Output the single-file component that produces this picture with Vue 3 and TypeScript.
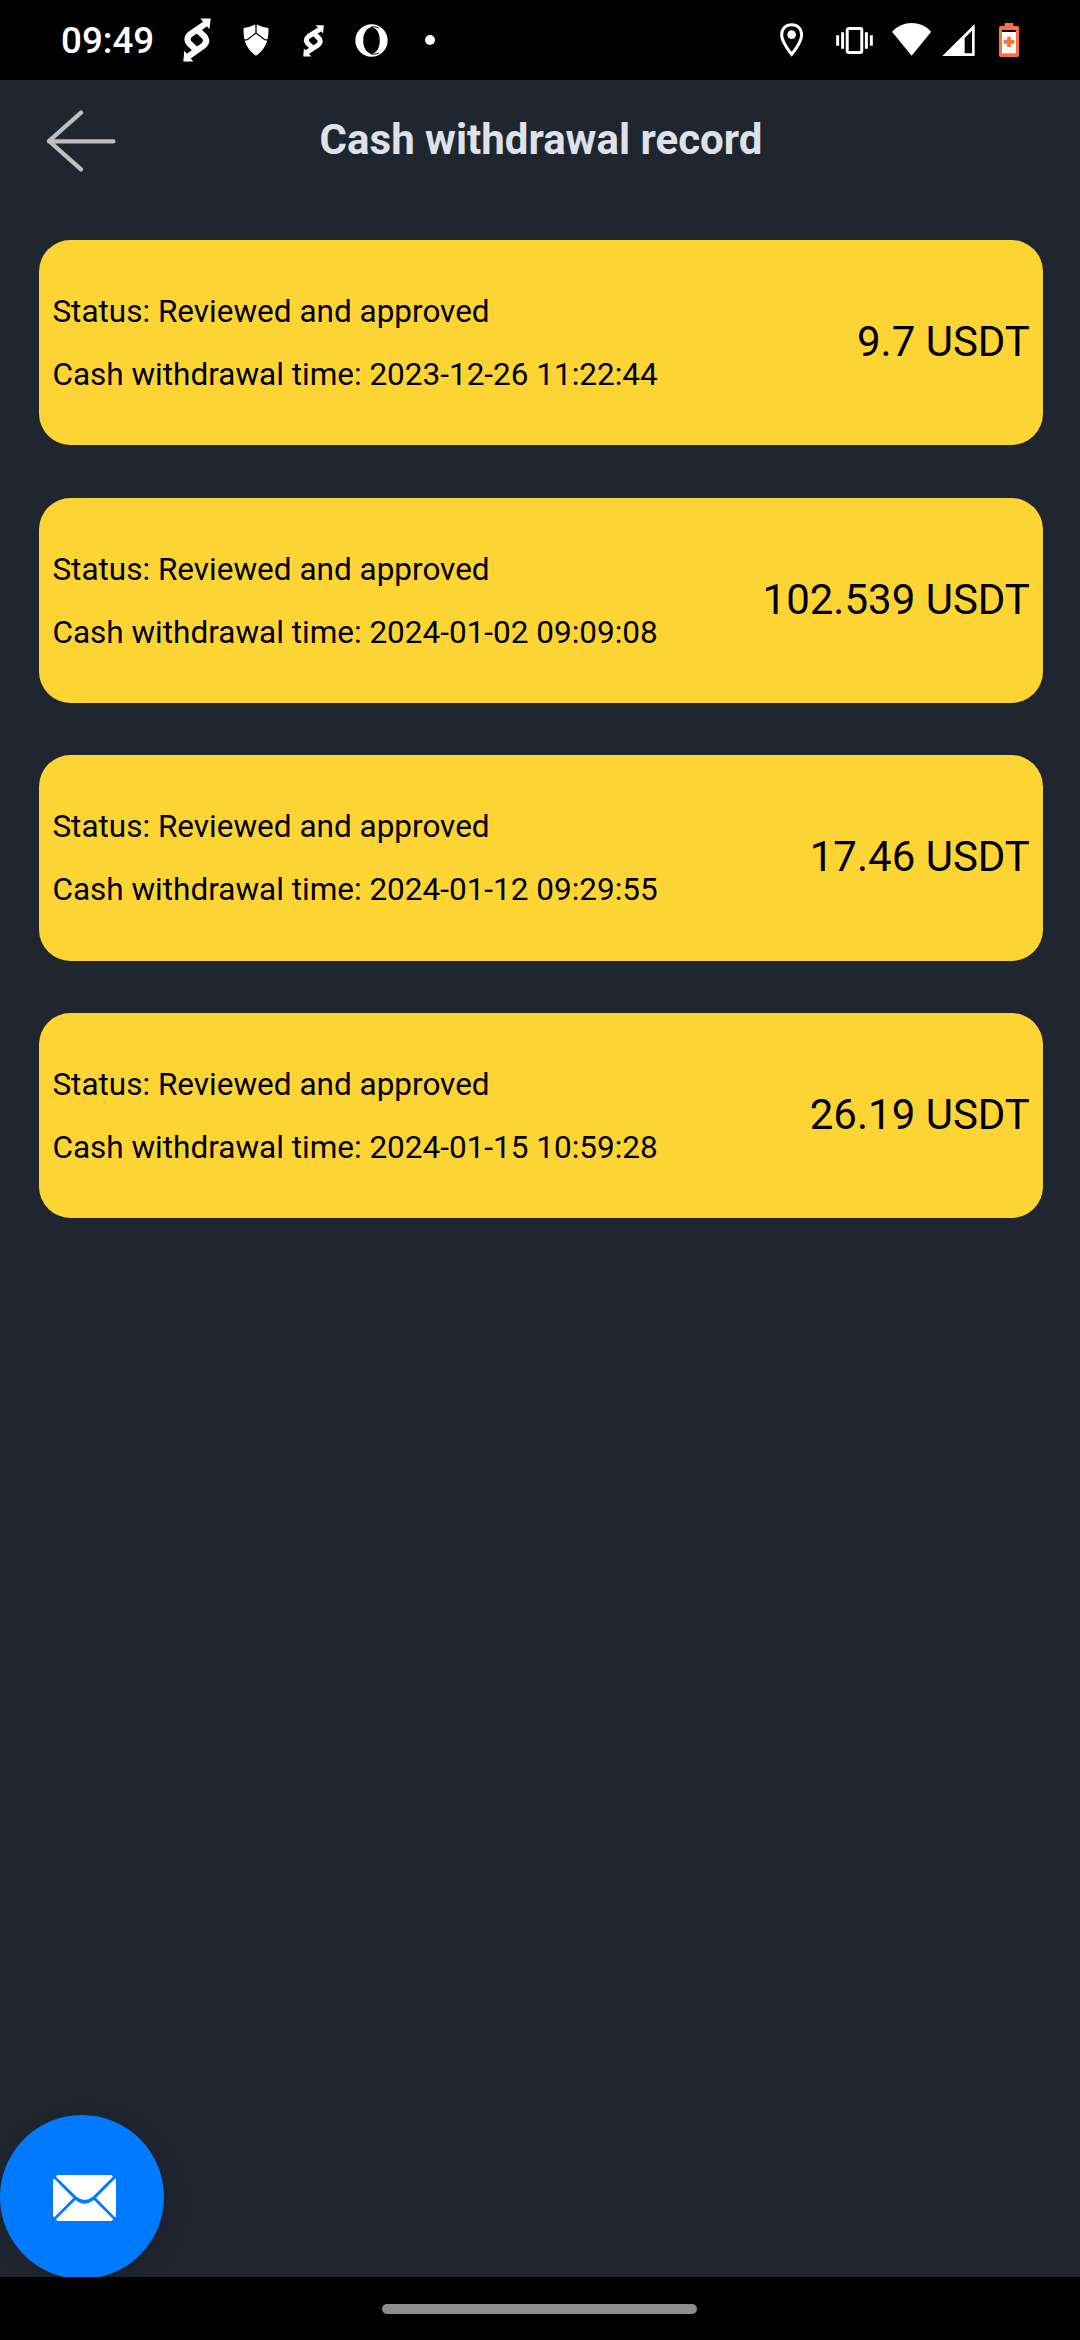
<script setup lang="ts">
interface WithdrawalRecord {
  status: string
  time: string
  amount: string
}

const records: WithdrawalRecord[] = [
  { status: 'Reviewed and approved', time: '2023-12-26 11:22:44', amount: '9.7' },
  { status: 'Reviewed and approved', time: '2024-01-02 09:09:08', amount: '102.539' },
  { status: 'Reviewed and approved', time: '2024-01-12 09:29:55', amount: '17.46' },
  { status: 'Reviewed and approved', time: '2024-01-15 10:59:28', amount: '26.19' },
]
</script>

<template>
  <div class="screen">
    <div class="status-bar">
      <div class="status-left">
        <span class="clock">09:49</span>
        <svg class="swap-large" viewBox="0 0 90 138">
          <g fill="none" stroke="#fff" stroke-width="19">
            <path d="M72 17 L24 50 Q8 63 18 78 L40 99" />
            <path d="M14 122 L62 88 Q78 75 68 60 L46 39" />
          </g>
          <path d="M54 2 L86 2 L82 36 Z M32 136 L1 136 L4 102 Z" fill="#fff" />
        </svg>
        <svg class="shield" viewBox="0 0 78 96">
          <path d="M39 1 Q57 10 76 12 Q80 68 39 95 Q-2 68 2 12 Q21 10 39 1 Z" fill="#fff" />
          <path d="M39 0 V26 M3 48 L13 47 L39 27 L65 47 L75 48" fill="none" stroke="#000" stroke-width="4" />
        </svg>
        <svg class="swap-small" viewBox="0 0 90 138">
          <g fill="none" stroke="#fff" stroke-width="21">
            <path d="M72 20 L24 50 Q8 63 18 78 L40 99" />
            <path d="M16 119 L64 88 Q80 75 70 60 L48 39" />
          </g>
          <path d="M54 3 L89 3 L86 38 Z M36 136 L1 136 L4 102 Z" fill="#fff" />
        </svg>
        <svg class="opera" viewBox="0 0 100 100">
          <path
            fill="#fff"
            fill-rule="evenodd"
            d="M50 1 A49 49 0 1 0 50 99 A49 49 0 1 0 50 1 Z M50 9 C34 14 25 28 25 50 S34 86 50 91 C66 88 75 73 75 50 S66 12 50 9 Z"
          />
          <path d="M48 9 Q62 7 72 12 M48 91 Q62 93 72 88" fill="none" stroke="#000" stroke-width="3" />
        </svg>
        <span class="more-dot"></span>
      </div>
      <div class="status-right">
        <svg class="pin" viewBox="0 0 70 100">
          <path d="M35 5 C17 5 5 18 5 35 C5 58 35 94 35 94 S65 58 65 35 C65 18 53 5 35 5 Z" fill="none" stroke="#fff" stroke-width="9" />
          <circle cx="35" cy="35" r="13" fill="#fff" />
        </svg>
        <svg class="vibrate" viewBox="0 0 112 80">
          <rect x="34" y="4" width="44" height="72" rx="4" fill="none" stroke="#fff" stroke-width="9" />
          <path d="M5 24 V56 M20 15 V65 M92 15 V65 M107 24 V56" stroke="#fff" stroke-width="9" />
        </svg>
        <svg class="wifi" viewBox="0 0 118 98">
          <path d="M59 98 L0 26 Q25 0 59 0 T118 26 Z" fill="#fff" />
        </svg>
        <svg class="signal" viewBox="0 0 98 97">
          <path d="M98 0 V97 H0 Z M90 20 L68 42 V88 H90 Z" fill="#fff" fill-rule="evenodd" />
        </svg>
        <svg class="battery" viewBox="0 0 60 102">
          <path d="M17 0 H43 V9 H55 Q60 9 60 14 V97 Q60 102 55 102 H5 Q0 102 0 97 V14 Q0 9 5 9 H17 Z" fill="#ff6e40" />
          <rect x="9" y="21" width="42" height="6" fill="#000" />
          <rect x="9" y="27" width="42" height="64" fill="#fff" />
          <path d="M30 41 V72 M14 56.5 H46" stroke="#ff6e40" stroke-width="11" />
        </svg>
      </div>
    </div>

    <div class="app">
      <header class="header">
        <svg class="back" viewBox="0 0 210 186">
          <path d="M105 8 L9 93 L105 178 M9 94 H202" fill="none" stroke="#bfbfbf" stroke-width="13" stroke-linecap="round" stroke-linejoin="round" />
        </svg>
        <h1 class="title">Cash withdrawal record</h1>
      </header>

      <main class="records">
        <article v-for="record in records" :key="record.time" class="card">
          <div class="details">
            <div>Status: {{ record.status }}</div>
            <div>Cash withdrawal time: {{ record.time }}</div>
          </div>
          <div class="amount">{{ record.amount }} USDT</div>
        </article>
      </main>

      <div class="mail-button">
        <svg class="envelope" viewBox="0 0 190 138">
          <g fill="#fff">
            <path d="M13 0 H176 L180 5 L121 64 Q95 86 69 64 L9 5 Z" />
            <path d="M0 14 L4 11 L61 69 L4 127 L0 124 Z" />
            <path d="M190 14 L186 11 L129 69 L186 127 L190 124 Z" />
            <path d="M9 133 L67 75 Q95 97 123 75 L181 133 L176 138 H13 Z" />
          </g>
        </svg>
      </div>
    </div>

    <div class="nav-bar"><span class="nav-handle"></span></div>
  </div>
</template>

<style>
body {
  margin: 0;
  background: #000;
}
</style>

<style scoped>
.screen {
  display: flex;
  flex-direction: column;
  width: 1080px;
  height: 2340px;
  overflow: hidden;
  background: #000;
  font-family: Roboto, "Liberation Sans", sans-serif;
}

svg {
  display: block;
  flex: none;
}

.status-bar {
  display: flex;
  flex: none;
  justify-content: space-between;
  height: 80px;
  padding: 0 61px;
  box-sizing: border-box;
}

.status-left,
.status-right {
  display: flex;
  align-items: center;
}

.clock {
  width: 94px;
  color: #fff;
  font-size: 36.75px;
  font-weight: 500;
  line-height: 44px;
  white-space: nowrap;
  margin-top: 2px;
}

.swap-large {
  width: 29px;
  height: 46px;
  margin-left: 27.5px;
}

.shield {
  width: 26px;
  height: 32px;
  margin-left: 31px;
}

.swap-small {
  width: 21px;
  height: 33.5px;
  margin: 2px 0 0 34px;
}

.opera {
  width: 33px;
  height: 33px;
  margin-left: 31.5px;
}

.more-dot {
  width: 10px;
  height: 10px;
  margin-left: 36.5px;
  border-radius: 50%;
  background: #fff;
}

.pin {
  width: 23.3px;
  height: 33.3px;
  margin-right: 32.7px;
}

.vibrate {
  width: 37px;
  height: 27px;
  margin-right: 19px;
}

.wifi {
  width: 39.3px;
  height: 32.7px;
  margin: -1px 11px 0 0;
}

.signal {
  width: 32.7px;
  height: 32.3px;
  margin-right: 24px;
}

.battery {
  width: 20px;
  height: 34px;
}

.app {
  position: relative;
  flex: 1;
  min-height: 0;
  overflow: hidden;
  background: #202630;
}

.header {
  display: flex;
  align-items: center;
  height: 119px;
  padding-left: 46px;
}

.back {
  width: 70px;
  height: 62px;
  margin-top: 2px;
}

.title {
  margin: 0 114px 0 0;
  flex: 1;
  color: #dfe1e9;
  font-size: 42px;
  font-weight: 700;
  line-height: 50px;
  text-align: center;
  white-space: nowrap;
}

.records {
  display: flex;
  flex-direction: column;
  gap: 52.2px;
  padding: 41px 37px 0 39.3px;
}

.card {
  display: flex;
  align-items: center;
  justify-content: space-between;
  height: 205.4px;
  padding: 0 13.1px;
  box-sizing: border-box;
  border-radius: 31.5px;
  background: #fcd535;
  color: #000;
  white-space: nowrap;
}

.details {
  margin-top: 0.5px;
  font-size: 31.5px;
  line-height: 63px;
}

.amount {
  margin-bottom: 1px;
  font-size: 42px;
  line-height: 50px;
}

.mail-button {
  position: absolute;
  left: 0;
  bottom: -2px;
  display: flex;
  align-items: center;
  justify-content: center;
  width: 164px;
  height: 164px;
  padding-left: 5px;
  box-sizing: border-box;
  border-radius: 50%;
  background: #007aff;
  box-shadow: 5px 5px 26px rgba(0, 0, 0, 0.16);
}

.envelope {
  width: 63.3px;
  height: 46px;
  margin-top: 1px;
}

.nav-bar {
  display: flex;
  flex: none;
  justify-content: center;
  height: 63px;
}

.nav-handle {
  width: 315px;
  height: 10px;
  margin-top: 27px;
  margin-left: -1px;
  border-radius: 5px;
  background: #8e8e8e;
}
</style>
